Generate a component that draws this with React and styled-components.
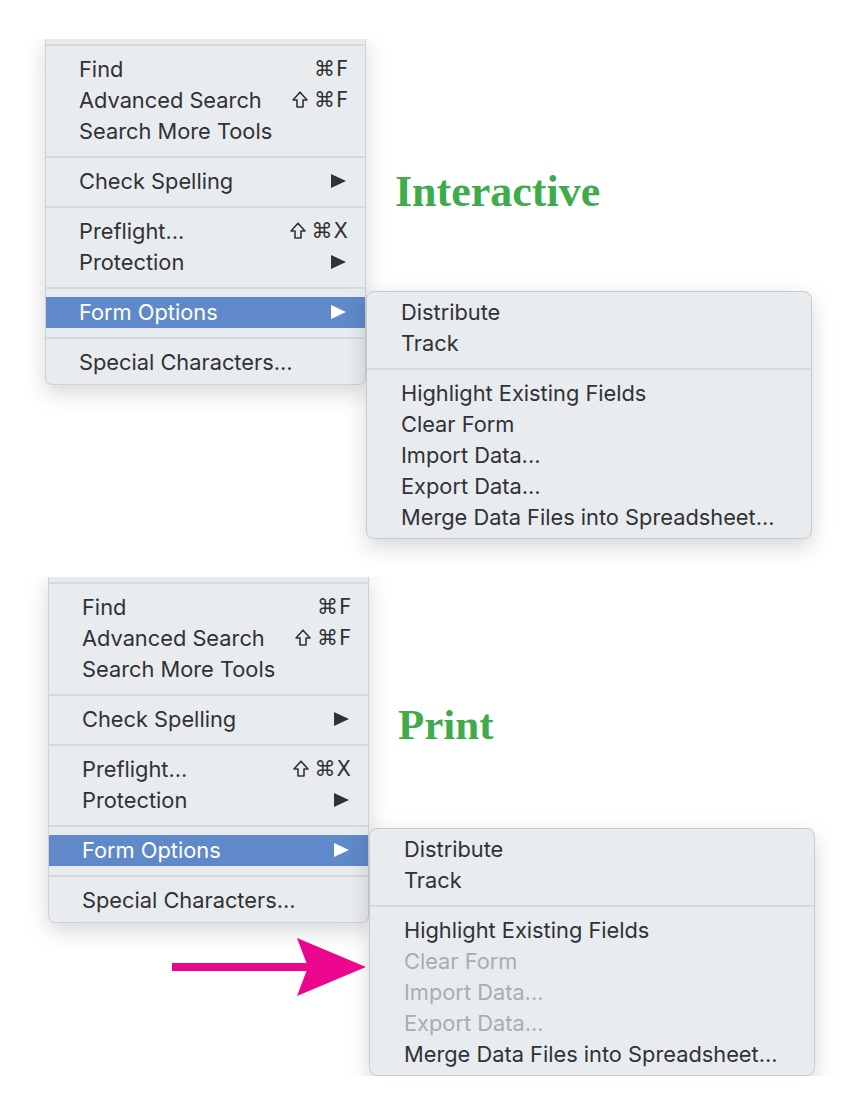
import React from "react";
import styled, { createGlobalStyle } from "styled-components";

const GlobalStyle = createGlobalStyle`
  html, body {
    margin: 0;
    padding: 0;
    background: #ffffff;
  }
  body {
    font-family: Inter, "Liberation Sans", "DejaVu Sans", sans-serif;
  }
`;

const mainGroups = [
  [
    { label: "Find", shortcut: "⌘F" },
    { label: "Advanced Search", shortcut: "⌘F", shift: true },
    { label: "Search More Tools" },
  ],
  [{ label: "Check Spelling", submenu: true }],
  [
    { label: "Preflight...", shortcut: "⌘X", shift: true },
    { label: "Protection", submenu: true },
  ],
  [{ label: "Form Options", submenu: true, active: true }],
  [{ label: "Special Characters..." }],
];

function formGroups(print) {
  return [
    [{ label: "Distribute" }, { label: "Track" }],
    [
      { label: "Highlight Existing Fields" },
      { label: "Clear Form", disabled: print },
      { label: "Import Data...", disabled: print },
      { label: "Export Data...", disabled: print },
      { label: "Merge Data Files into Spreadsheet..." },
    ],
  ];
}

const Page = styled.div`
  width: 862px;
  display: flex;
  flex-direction: column;
`;

const Figure = styled.div`
  position: relative;
  display: flex;
  align-items: flex-start;
  margin: ${(p) => p.$top}px 0 0 ${(p) => p.$left}px;
`;

const Menu = styled.div`
  width: 321px;
  box-sizing: border-box;
  padding-bottom: 6px;
  background: #e8ecee;
  border: 1px solid #cfd2d5;
  border-top: none;
  border-radius: 0 0 7px 7px;
  box-shadow: 0 8px 22px rgba(0, 0, 0, 0.16);
  /* the screenshot cuts the menu off at the top */
  clip-path: inset(4px -60px -60px -60px);
`;

const Aside = styled.div`
  display: flex;
  flex-direction: column;
  align-items: flex-start;
`;

const Label = styled.div`
  margin: ${(p) => p.$top}px 0 0 29px;
  font-family: "Liberation Serif", "DejaVu Serif", serif;
  font-weight: 700;
  font-size: ${(p) => p.$size}px;
  line-height: ${(p) => p.$size}px;
  color: #3fac4b;
`;

const Submenu = styled.div`
  position: relative;
  z-index: 1;
  width: 446px;
  box-sizing: border-box;
  margin-top: ${(p) => p.$top}px;
  padding: 5px 0;
  background: #e8ecee;
  border: 1px solid #c8cbce;
  border-radius: 8px;
  box-shadow: 0 8px 22px rgba(0, 0, 0, 0.16);
`;

const Separator = styled.div`
  height: 19px;
  display: flex;
  align-items: center;

  &::after {
    content: "";
    flex: 1;
    height: 2px;
    background: #d6dadd;
  }
`;

const Item = styled.div`
  height: 31px;
  box-sizing: border-box;
  display: flex;
  align-items: center;
  justify-content: space-between;
  padding: 0 16px 2px ${(p) => p.$indent}px;
  font-size: 21.8px;
  color: ${(p) => (p.$active ? "#ffffff" : p.$disabled ? "#a9adb1" : "#303235")};
  background: ${(p) => (p.$active ? "#5f89c9" : "transparent")};
  white-space: nowrap;
`;

const Shortcut = styled.span`
  display: flex;
  align-items: center;
  gap: 6px;
  font-family: "DejaVu Sans", Inter, sans-serif;
  font-size: 21px;
  letter-spacing: 1px;
`;

const ShiftIcon = styled.svg`
  width: 16px;
  height: 17px;
  fill: none;
  stroke: currentColor;
  stroke-width: 1.6;
  stroke-linejoin: round;
`;

const Arrow = styled.svg`
  width: 15px;
  height: 14px;
  margin-right: 3px;
  fill: currentColor;
`;

const Pointer = styled.svg`
  position: absolute;
  z-index: 2;
  left: 124px;
  top: 365px;
  width: 194px;
  height: 58px;
`;

function SubArrow() {
  return (
    <Arrow viewBox="0 0 15 14">
      <polygon points="0,0 15,7 0,14" />
    </Arrow>
  );
}

function MenuItem({ item, indent }) {
  return (
    <Item $indent={indent} $active={item.active} $disabled={item.disabled}>
      <span>{item.label}</span>
      {item.shortcut && (
        <Shortcut>
          {item.shift && (
            <ShiftIcon viewBox="0 0 16 17">
              <path d="M8 1.2 L15 9 H11 V16 H5 V9 H1 Z" />
            </ShiftIcon>
          )}
          <span>{item.shortcut}</span>
        </Shortcut>
      )}
      {item.submenu && <SubArrow />}
    </Item>
  );
}

function Groups({ groups, indent, leading }) {
  return groups.map((group, gi) => (
    <React.Fragment key={gi}>
      {(gi > 0 || leading) && <Separator />}
      {group.map((item) => (
        <MenuItem key={item.label} item={item} indent={indent} />
      ))}
    </React.Fragment>
  ));
}

function Shot({ title, titleSize, titleTop, subTop, top, left, print }) {
  return (
    <Figure $top={top} $left={left}>
      <Menu>
        <Groups groups={mainGroups} indent={33} leading />
      </Menu>
      <Aside>
        <Label $top={titleTop} $size={titleSize}>
          {title}
        </Label>
        <Submenu $top={subTop}>
          <Groups groups={formGroups(print)} indent={34} />
        </Submenu>
      </Aside>
      {print && (
        <Pointer viewBox="0 0 194 58">
          <path
            d="M0 25 H134.5 L125 0 L194 29 L125 58 L134.5 33 H0 Z"
            fill="#ec068d"
          />
        </Pointer>
      )}
    </Figure>
  );
}

export default function App() {
  return (
    <>
      <GlobalStyle />
      <Page>
        <Shot
          title="Interactive"
          titleSize={44}
          titleTop={135}
          subTop={77}
          top={35}
          left={45}
        />
        <Shot
          title="Print"
          titleSize={43}
          titleTop={130}
          subTop={82}
          top={34}
          left={48}
          print
        />
      </Page>
    </>
  );
}
